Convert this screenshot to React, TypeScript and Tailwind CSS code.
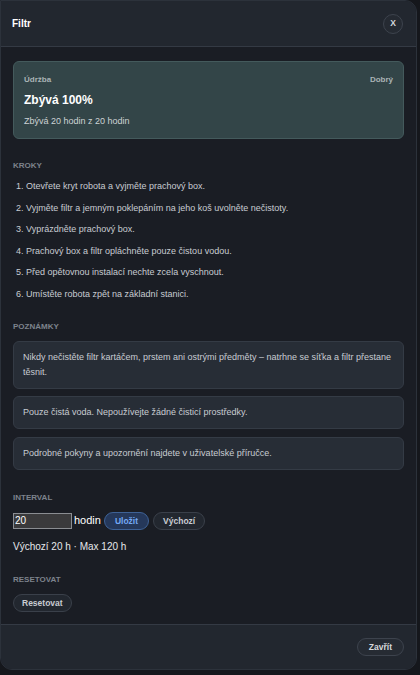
const steps = [
  'Otevřete kryt robota a vyjměte prachový box.',
  'Vyjměte filtr a jemným poklepáním na jeho koš uvolněte nečistoty.',
  'Vyprázdněte prachový box.',
  'Prachový box a filtr opláchněte pouze čistou vodou.',
  'Před opětovnou instalací nechte zcela vyschnout.',
  'Umístěte robota zpět na základní stanici.',
];

const notes = [
  'Nikdy nečistěte filtr kartáčem, prstem ani ostrými předměty – natrhne se síťka a filtr přestane těsnit.',
  'Pouze čistá voda. Nepoužívejte žádné čisticí prostředky.',
  'Podrobné pokyny a upozornění najdete v uživatelské příručce.',
];

function SectionLabel({ children }: { children: React.ReactNode }) {
  return <div className="text-[8px] font-bold uppercase leading-[10px] text-[#7d838c]">{children}</div>;
}

export default function App() {
  return (
    <div className="h-[675px] w-[420px] overflow-hidden bg-[#15171c] font-['Liberation_Sans',sans-serif]">
      <div className="flex h-[670px] w-[417px] flex-col overflow-hidden rounded-b-xl rounded-tr-xl border border-[#2c323b] bg-[#1a1d24]">
        <div className="flex h-[46px] shrink-0 items-center justify-between border-b border-[#343a44] bg-[#22272f] pl-[11px] pr-[13px]">
          <span className="text-[10px] font-bold leading-[12px] text-white">Filtr</span>
          <button className="flex h-[20px] w-[20px] items-center justify-center rounded-full border border-[#3d434d] bg-[#252a32] text-[8.5px] font-bold leading-none text-[#d6d8dc]">
            X
          </button>
        </div>

        <div className="flex-1 px-3 pt-[14px]">
          <div className="rounded-md border border-[#445a5c] bg-[#334548] px-[10px] pb-[11px] pt-[13px]">
            <div className="flex justify-between text-[8px] font-bold leading-[10px] text-[#aab4b6]">
              <span>Údržba</span>
              <span>Dobrý</span>
            </div>
            <div className="mt-[7px] text-[12px] font-bold leading-[16px] text-white">Zbývá 100%</div>
            <div className="mt-[8px] text-[9px] leading-[11px] text-[#cdd3d4]">Zbývá 20 hodin z 20 hodin</div>
          </div>

          <div className="mt-[22px]">
            <SectionLabel>Kroky</SectionLabel>
            <ol className="mt-[9px] flex flex-col gap-[9.6px] pl-[3px] text-[9px] leading-[12px] text-[#c8ccd2]">
              {steps.map((s, i) => (
                <li key={i}>
                  {i + 1}. {s}
                </li>
              ))}
            </ol>
          </div>

          <div className="mt-[22px]">
            <SectionLabel>Poznámky</SectionLabel>
            <div className="mt-[9px] flex flex-col gap-[7.5px]">
              {notes.map((n, i) => (
                <div
                  key={i}
                  className="rounded-md border border-[#343b45] bg-[#272d36] px-[9px] py-[8px] text-[9px] leading-[15px] text-[#c8ccd2]"
                >
                  {n}
                </div>
              ))}
            </div>
          </div>

          <div className="mt-[23px]">
            <SectionLabel>Interval</SectionLabel>
            <div className="mt-[9px] flex items-center">
              <input
                defaultValue="20"
                className="h-[16px] w-[59px] border border-[#8a8d92] bg-[#3a3a3c] px-[1px] text-[10px] leading-none text-white outline-none"
              />
              <span className="ml-[2px] text-[11px] leading-[13px] text-white">hodin</span>
              <button className="ml-[3px] h-[18px] rounded-full border border-[#3e6296] bg-[#25385a] px-[10px] text-[8.5px] font-bold leading-none text-[#74a9f4]">
                Uložit
              </button>
              <button className="ml-[4px] h-[18px] rounded-full border border-[#3a404a] bg-[#22272f] px-[9px] text-[8.5px] font-bold leading-none text-[#c8ccd2]">
                Výchozí
              </button>
            </div>
            <div className="mt-[10px] text-[10px] leading-[13px] text-[#e6e8eb]">Výchozí 20 h · Max 120 h</div>
          </div>

          <div className="mt-[22px]">
            <SectionLabel>Resetovat</SectionLabel>
            <button className="mt-[9px] h-[18px] rounded-full border border-[#3a404a] bg-[#22272f] px-[8px] text-[8.5px] font-bold leading-none text-[#c8ccd2]">
              Resetovat
            </button>
          </div>
        </div>

        <div className="flex h-[45px] shrink-0 items-center justify-end border-t border-[#343a44] bg-[#22272f] pr-[12px]">
          <button className="h-[18px] rounded-full border border-[#3d434d] bg-[#262b33] px-[11px] text-[8.5px] font-bold leading-none text-[#d6d8dc]">
            Zavřít
          </button>
        </div>
      </div>
    </div>
  );
}
